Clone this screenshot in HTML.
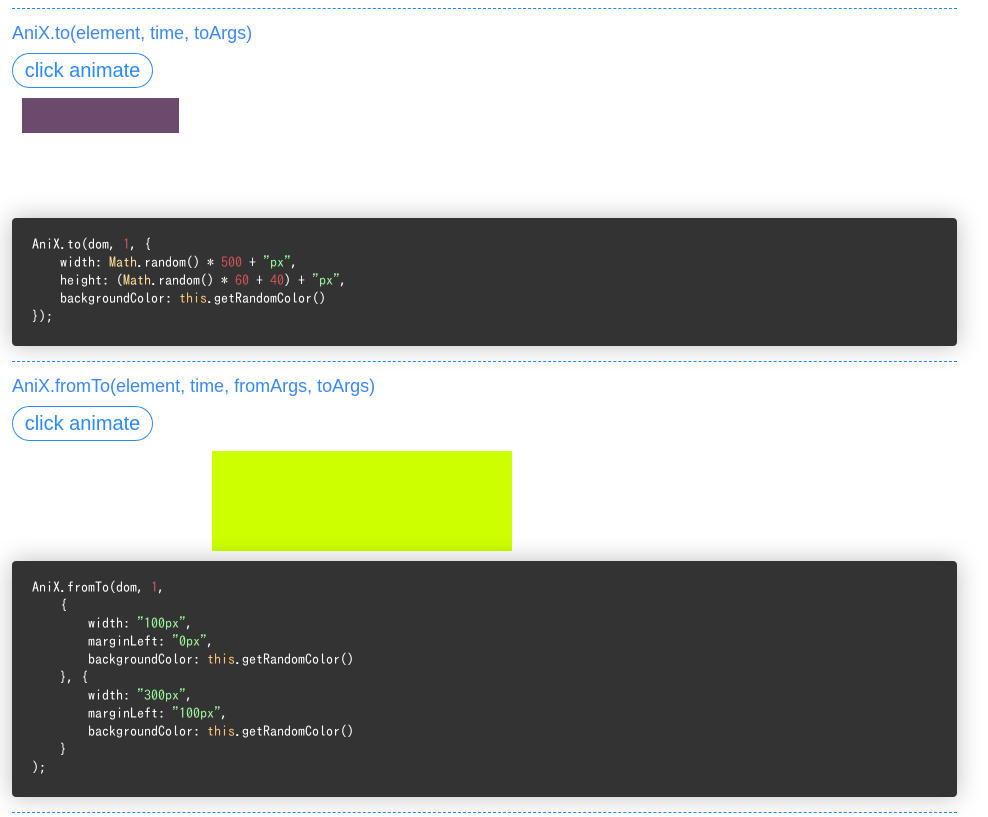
<!DOCTYPE html>
<html>
<head>
<meta charset="utf-8">
<style>
html,body{margin:0;padding:0;background:#fff;width:988px;height:817px;overflow:hidden}
body{position:relative;font-family:"Liberation Sans",sans-serif}
.line{position:absolute;left:12px;width:945px;height:0;border-top:1px dashed #1e88f5}
.title{position:absolute;left:12px;font-size:18px;line-height:24px;color:#3a88f8;white-space:nowrap}
.btn{position:absolute;left:12px;width:141px;height:35px;box-sizing:border-box;border:1px solid #2b8bf2;border-radius:18px;color:#2b8bf2;font-size:20px;line-height:35px;text-align:center;white-space:nowrap}
.box{position:absolute}
pre{position:absolute;left:12px;width:945px;margin:0;box-sizing:border-box;padding:17px 20px;background:#333;border-radius:4px;box-shadow:0 0 25px rgba(0,0,0,.26);color:#fff;font-family:"IPAGothic","Liberation Mono",monospace;font-size:14px;line-height:18px}
.n{color:#d0525f}.s{color:#9dfa9d}.m{color:#ffe39c}.t{color:#fcc877}
</style>
</head>
<body>
<div class="line" style="top:8px"></div>
<div class="title" style="top:21px">AniX.to(element, time, toArgs)</div>
<div class="btn" style="top:53px">click animate</div>
<div class="box" style="left:22px;top:98px;width:157px;height:35px;background:#6b4a6e"></div>
<pre style="top:218px;height:128px">AniX.to(dom, <span class="n">1</span>, {
    width: <span class="m">Math</span>.random() * <span class="n">500</span> + <span class="s">"px"</span>,
    height: (<span class="m">Math</span>.random() * <span class="n">60</span> + <span class="n">40</span>) + <span class="s">"px"</span>,
    backgroundColor: <span class="t">this</span>.getRandomColor()
});</pre>
<div class="line" style="top:361px"></div>
<div class="title" style="top:374px">AniX.fromTo(element, time, fromArgs, toArgs)</div>
<div class="btn" style="top:406px">click animate</div>
<div class="box" style="left:212px;top:451px;width:300px;height:100px;background:#ccff00"></div>
<pre style="top:561px;height:236px">AniX.fromTo(dom, <span class="n">1</span>,
    {
        width: <span class="s">"100px"</span>,
        marginLeft: <span class="s">"0px"</span>,
        backgroundColor: <span class="t">this</span>.getRandomColor()
    }, {
        width: <span class="s">"300px"</span>,
        marginLeft: <span class="s">"100px"</span>,
        backgroundColor: <span class="t">this</span>.getRandomColor()
    }
);</pre>
<div class="line" style="top:812px"></div>
</body>
</html>
